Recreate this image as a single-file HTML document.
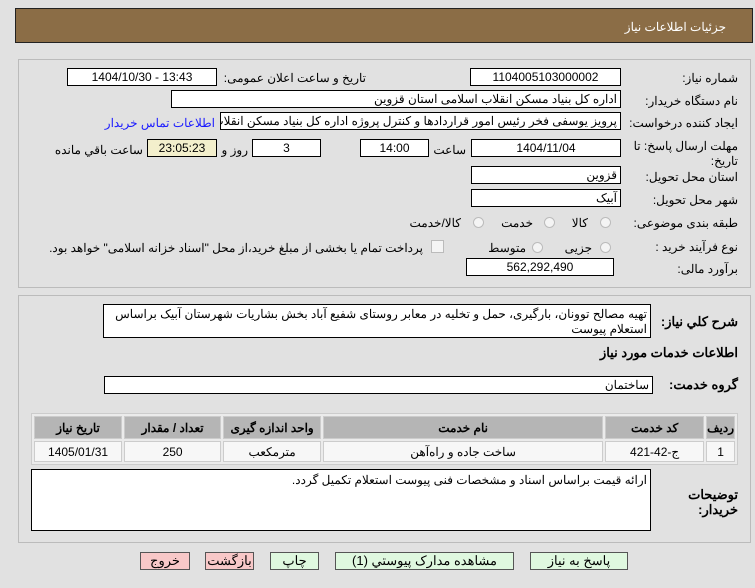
<!DOCTYPE html>
<html><head><meta charset="utf-8"><style>
body{margin:0;width:755px;height:588px;background:#e1e1e1;font-family:"Liberation Sans","Noto Sans CJK SC",sans-serif;font-size:12px;color:#000;position:relative;overflow:hidden}
.a{position:absolute}
.box{position:absolute;background:#fff;border:1px solid #000;box-sizing:border-box;height:18px;line-height:16px;text-align:center;font-size:12px;white-space:nowrap;overflow:hidden}
.r{text-align:right;padding-right:3px}
.l{position:absolute;direction:rtl;white-space:nowrap;font-size:12px}
.rad{position:absolute;width:11px;height:11px;border-radius:50%;border:1px solid #bbb;background:#f4f4f4;box-sizing:border-box}
.btn{position:absolute;top:552px;height:18px;border:1px solid #555;box-sizing:border-box;text-align:center;line-height:16px;font-size:13px}
td{border:1px solid #ccc;text-align:center;padding:0}
</style></head><body>
<div class="a" style="left:15px;top:8px;width:738px;height:35px;background:#8b6d46;border:1px solid #222;box-sizing:border-box"></div>
<div class="l" style="right:29px;top:20px;color:#fff;font-size:12px">جزئیات اطلاعات نیاز</div>

<div class="a" style="left:18px;top:59px;width:733px;height:229px;border:1px solid #bbb;box-sizing:border-box"></div>

<div class="l" style="right:17px;top:71px">شماره نیاز:</div>
<div class="box" style="left:470px;top:68px;width:151px">1104005103000002</div>
<div class="l" style="right:389px;top:71px">تاریخ و ساعت اعلان عمومی:</div>
<div class="box" style="left:67px;top:68px;width:150px">1404/10/30 - 13:43</div>

<div class="l" style="right:17px;top:94px">نام دستگاه خریدار:</div>
<div class="box r" style="left:171px;top:90px;width:450px;direction:rtl">اداره کل بنیاد مسکن انقلاب اسلامی استان قزوین</div>

<div class="l" style="right:17px;top:116px">ایجاد کننده درخواست:</div>
<div class="box r" style="left:220px;top:112px;width:401px;direction:rtl">پرویز یوسفی فخر رئیس امور قراردادها و کنترل پروژه اداره کل بنیاد مسکن انقلاب</div>
<div class="l" style="right:540px;top:116px;color:#1a1aff">اطلاعات تماس خریدار</div>

<div class="l" style="right:17px;top:139px;line-height:15px;text-align:right">مهلت ارسال پاسخ: تا<br>تاریخ:</div>
<div class="box" style="left:471px;top:139px;width:150px">1404/11/04</div>
<div class="l" style="right:289px;top:143px">ساعت</div>
<div class="box" style="left:360px;top:139px;width:69px">14:00</div>
<div class="box" style="left:252px;top:139px;width:69px">3</div>
<div class="l" style="right:507px;top:143px">روز و</div>
<div class="box" style="left:147px;top:139px;width:70px;background:#f3efcc">23:05:23</div>
<div class="l" style="right:612px;top:143px">ساعت باقي مانده</div>

<div class="l" style="right:17px;top:170px">استان محل تحویل:</div>
<div class="box r" style="left:471px;top:166px;width:150px">قزوین</div>
<div class="l" style="right:17px;top:193px">شهر محل تحویل:</div>
<div class="box r" style="left:471px;top:189px;width:150px">آبیک</div>

<div class="l" style="right:17px;top:216px">طبقه بندی موضوعی:</div>
<div class="rad" style="left:600px;top:217px"></div><div class="l" style="right:167px;top:216px">کالا</div>
<div class="rad" style="left:544px;top:217px"></div><div class="l" style="right:222px;top:216px">خدمت</div>
<div class="rad" style="left:473px;top:217px"></div><div class="l" style="right:294px;top:216px">کالا/خدمت</div>

<div class="l" style="right:17px;top:240px">نوع فرآیند خرید :</div>
<div class="rad" style="left:600px;top:242px"></div><div class="l" style="right:163px;top:241px">جزیی</div>
<div class="rad" style="left:532px;top:242px"></div><div class="l" style="right:229px;top:241px">متوسط</div>
<div class="a" style="left:431px;top:240px;width:11px;height:11px;border:1px solid #bbb;background:#f4f4f4"></div>
<div class="l" style="right:332px;top:241px">پرداخت تمام یا بخشی از مبلغ خرید،از محل "اسناد خزانه اسلامی" خواهد بود.</div>

<div class="l" style="right:17px;top:262px">برآورد مالی:</div>
<div class="box" style="left:466px;top:258px;width:148px">562,292,490</div>

<div class="a" style="left:18px;top:295px;width:733px;height:248px;border:1px solid #bbb;box-sizing:border-box"></div>
<div class="l" style="right:17px;top:314px;font-weight:bold;font-size:13px">شرح کلي نیاز:</div>
<div class="a" style="left:103px;top:304px;width:548px;height:34px;background:#fff;border:1px solid #000;box-sizing:border-box;direction:rtl;padding:2px 3px;line-height:15px;font-size:12px">تهیه مصالح توونان، بارگیری، حمل و تخلیه در معابر روستای شفیع آباد بخش بشاریات شهرستان آبیک براساس استعلام پیوست</div>
<div class="l" style="right:17px;top:345px;font-weight:bold;font-size:13px">اطلاعات خدمات مورد نیاز</div>
<div class="l" style="right:17px;top:377px;font-weight:bold;font-size:13px">گروه خدمت:</div>
<div class="box r" style="left:104px;top:376px;width:549px;direction:rtl">ساختمان</div>

<table class="a" style="left:31px;top:413px;width:707px;border-collapse:separate;border-spacing:2px;background:#ebebeb;border:1px solid #ccc;direction:rtl;font-size:12px">
<tr style="background:#b5b5b5;font-weight:bold;height:23px"><td style="width:25px">ردیف</td><td style="width:97px">کد خدمت</td><td style="width:278px">نام خدمت</td><td style="width:96px">واحد اندازه گیری</td><td style="width:95px">تعداد / مقدار</td><td>تاریخ نیاز</td></tr>
<tr style="background:#f7f7f7;height:21px"><td>1</td><td>ج-42-421</td><td>ساخت جاده و راه‌آهن</td><td>مترمکعب</td><td>250</td><td>1405/01/31</td></tr>
</table>

<div class="l" style="right:17px;top:487px;font-weight:bold;font-size:13px;line-height:15px;text-align:right">توضیحات<br>خریدار:</div>
<div class="a" style="left:31px;top:469px;width:620px;height:62px;background:#fff;border:1px solid #000;box-sizing:border-box;direction:rtl;padding:3px;font-size:12px">ارائه قیمت براساس اسناد و مشخصات فنی پیوست استعلام تکمیل گردد.</div>

<div class="btn" style="left:140px;width:50px;background:#f8c8c8">خروج</div>
<div class="btn" style="left:205px;width:49px;background:#f8c8c8">بازگشت</div>
<div class="btn" style="left:270px;width:49px;background:#dff8df">چاپ</div>
<div class="btn" style="left:335px;width:179px;background:#dff8df">مشاهده مدارک پیوستي (1)</div>
<div class="btn" style="left:530px;width:98px;background:#dff8df">پاسخ به نیاز</div>
</body></html>
